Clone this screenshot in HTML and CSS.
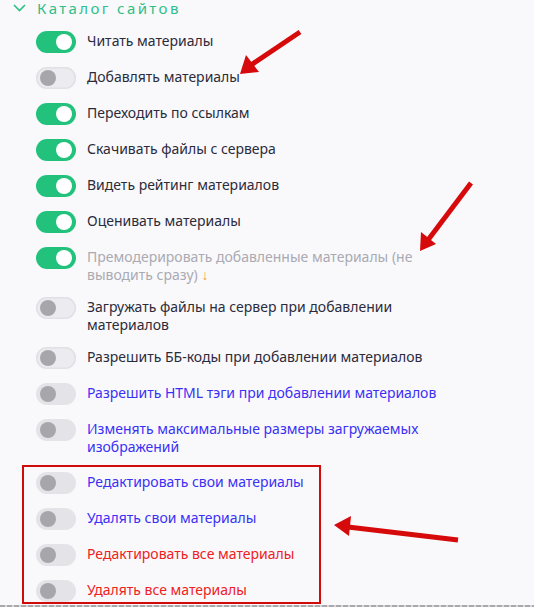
FILE: index.html
```html
<!DOCTYPE html>
<html lang="ru">
<head>
<meta charset="utf-8">
<link rel="stylesheet" href="styles.css">
</head>
<body>
<div class="page">
  <div class="header">
    <svg class="chev" width="13" height="8" viewBox="0 0 13 8"><path d="M1 1 L6.5 6.5 L12 1" fill="none" stroke="#2fbf86" stroke-width="1.6"/></svg>
    <span class="title">Каталог сайтов</span>
  </div>
  <div class="list">
    <div class="row"><span class="tg on"></span><span class="lbl">Читать материалы</span></div>
    <div class="row"><span class="tg"></span><span class="lbl">Добавлять материалы</span></div>
    <div class="row"><span class="tg on"></span><span class="lbl">Переходить по ссылкам</span></div>
    <div class="row"><span class="tg on"></span><span class="lbl">Скачивать файлы с сервера</span></div>
    <div class="row"><span class="tg on"></span><span class="lbl">Видеть рейтинг материалов</span></div>
    <div class="row"><span class="tg on"></span><span class="lbl">Оценивать материалы</span></div>
    <div class="row"><span class="tg on"></span><span class="lbl muted">Премодерировать добавленные материалы (не выводить сразу) <span class="down">↓</span></span></div>
    <div class="row"><span class="tg"></span><span class="lbl">Загружать файлы на сервер при добавлении материалов</span></div>
    <div class="row"><span class="tg"></span><span class="lbl">Разрешить ББ-коды при добавлении материалов</span></div>
    <div class="row"><span class="tg light"></span><span class="lbl blue">Разрешить HTML тэги при добавлении материалов</span></div>
    <div class="row"><span class="tg light"></span><span class="lbl blue">Изменять максимальные размеры загружаемых изображений</span></div>
  </div>
  <div class="group">
    <div class="row"><span class="tg light"></span><span class="lbl blue">Редактировать свои материалы</span></div>
    <div class="row"><span class="tg light"></span><span class="lbl blue">Удалять свои материалы</span></div>
    <div class="row"><span class="tg light"></span><span class="lbl red">Редактировать все материалы</span></div>
    <div class="row"><span class="tg light"></span><span class="lbl red">Удалять все материалы</span></div>
  </div>
  <div class="dash"></div>
  <svg class="arrows" width="534" height="607" viewBox="0 0 534 607">
    <g stroke="#d60a0a" stroke-width="5" fill="none">
      <line x1="300" y1="32" x2="251" y2="65"/>
      <line x1="471" y1="183" x2="428" y2="240"/>
      <line x1="458" y1="540" x2="348" y2="527"/>
    </g>
    <g fill="#d60a0a">
      <polygon points="240,74 246,55 259,72"/>
      <polygon points="420,251 421,232 436,244"/>
      <polygon points="334,525 351,516 349,536"/>
    </g>
  </svg>
</div>
</body>
</html>
```
FILE: styles.css
```css
html, body {
  margin: 0;
  padding: 0;
  background: #f9f9fc;
}
.page {
  position: relative;
  width: 534px;
  height: 607px;
  overflow: hidden;
  font-family: "Noto Sans", "Open Sans", sans-serif;
  font-size: 14px;
  color: #2c2b3a;
}
.header {
  display: flex;
  align-items: center;
  height: 16px;
  padding-left: 13px;
  gap: 11px;
}
.title {
  color: #2fbf86;
  font-size: 15px;
  letter-spacing: 2.4px;
  line-height: 16px;
}
.list {
  display: flex;
  flex-direction: column;
  gap: 14px;
  padding: 15px 0 0 36px;
}
.row {
  display: flex;
  align-items: flex-start;
  gap: 11px;
  width: 420px;
}
.lbl {
  line-height: 18px;
  padding-top: 1px;
  margin-bottom: -1px;
  flex: 1;
}
.muted { color: #aaaab2; }
.down { color: #f5a33a; }
.blue { color: #3b30f5; }
.red { color: #f0201c; }
.tg {
  position: relative;
  flex: none;
  width: 40px;
  height: 22px;
  border-radius: 11px;
  background: #ececf0;
  box-shadow: inset 0 0 0 1.5px #e0e0e6;
}
.tg::after {
  content: "";
  position: absolute;
  top: 3px;
  left: 4px;
  width: 16px;
  height: 16px;
  border-radius: 50%;
  background: #a6a6ab;
}
.tg.light {
  background: #e3e3e8;
  box-shadow: none;
}
.tg.on {
  background: #22c27d;
  box-shadow: none;
}
.tg.on::after {
  left: auto;
  right: 4px;
  background: #ffffff;
}
.group {
  margin: 10px 0 0 22px;
  width: 283px;
  border: 2px solid #d10a0a;
  padding: 5px 0 0 12px;
  display: flex;
  flex-direction: column;
  gap: 14px;
}
.group .row { width: auto; }
.dash {
  position: absolute;
  left: 0;
  right: 0;
  bottom: 0;
  height: 2px;
  background: repeating-linear-gradient(90deg, #a8a8ad 0 5px, #d8d8dc 5px 7px);
}
.arrows {
  position: absolute;
  left: 0;
  top: 0;
  pointer-events: none;
}
```
